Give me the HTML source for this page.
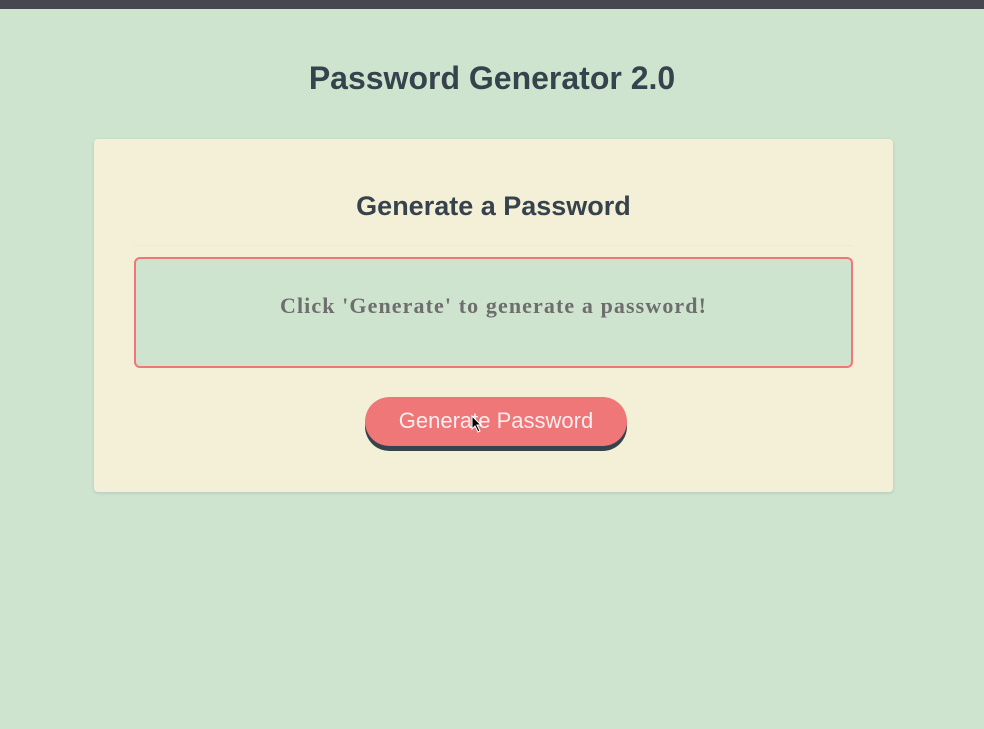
<!DOCTYPE html>
<html><head><style>
body{margin:0;width:984px;height:729px;background:#cee4cf;font-family:"Liberation Sans",sans-serif;overflow:hidden;position:relative}
.bar{position:absolute;left:0;top:0;width:984px;height:9px;background:#46474f}
h1{position:absolute;top:59px;left:0;width:984px;text-align:center;margin:0;font-size:32px;font-weight:bold;color:#36434d;line-height:38px}
.card{position:absolute;left:94px;top:139px;width:799px;height:353px;background:#f4f0d7;border-radius:4px;box-shadow:0 1px 3px rgba(0,0,0,.12)}
h2{position:absolute;top:190px;left:94px;width:799px;text-align:center;margin:0;font-size:27px;font-weight:bold;color:#36434d;line-height:32px}
.line{position:absolute;left:134px;top:245px;width:719px;height:1px;background:#ebe9df}
.ta{position:absolute;left:134px;top:257px;width:715px;height:107px;border:2px solid #ef7777;border-radius:6px;background:#cee4cf;text-align:center;font-family:"Liberation Serif",serif;font-weight:bold;font-size:22px;letter-spacing:1.1px;color:#6e6e6e;line-height:94px}
.btn{position:absolute;left:365px;top:397px;width:262px;height:49px;border-radius:25px;background:#ef7777;box-shadow:0 5px 0 #36434d;color:#fbeef0;font-size:22px;text-align:center;line-height:48px}
</style></head><body>
<div class="bar"></div>
<h1>Password Generator 2.0</h1>
<div class="card"></div>
<h2>Generate a Password</h2>
<div class="line"></div>
<div class="ta">Click 'Generate' to generate a password!</div>
<div class="btn">Generate Password</div>
<svg style="position:absolute;left:471px;top:415px" width="12" height="18" viewBox="0 0 12 18"><path d="M1 1 L1 14 L4 11 L7 17 L9 16 L6 10 L10 10 Z" fill="#000" stroke="#fff" stroke-width="1"/></svg>
</body></html>
